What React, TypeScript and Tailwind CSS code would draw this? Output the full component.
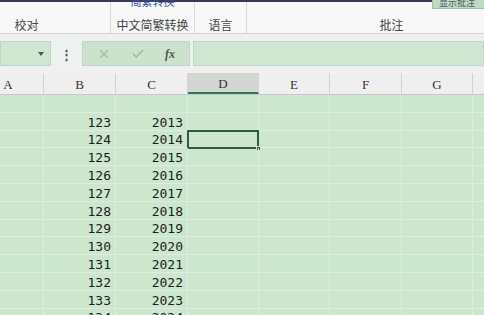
import { X, Check } from 'lucide-react'

const cols = [
  { name: 'A', w: 'w-[71px]' },
  { name: 'B', w: 'w-[72px]' },
  { name: 'C', w: 'w-[72px]' },
  { name: 'D', w: 'w-[71px]' },
  { name: 'E', w: 'w-[71px]' },
  { name: 'F', w: 'w-[72px]' },
  { name: 'G', w: 'w-[71px]' },
  { name: '', w: 'w-[71px]' },
]

const rows: [string, string][] = [
  ['', ''],
  ['123', '2013'],
  ['124', '2014'],
  ['125', '2015'],
  ['126', '2016'],
  ['127', '2017'],
  ['128', '2018'],
  ['129', '2019'],
  ['130', '2020'],
  ['131', '2021'],
  ['132', '2022'],
  ['133', '2023'],
  ['134', '2024'],
]

function Ribbon() {
  return (
    <div className="h-[34px] bg-[#f8f8f8] border-b border-[#d4d4d4] relative overflow-hidden">
      <div className="h-[2px] bg-[#3a3858]" />
      <div className="flex h-[32px] text-[12px] text-[#444]">
        <div className="w-[111px] border-r border-[#d8d8d8] flex items-end justify-center pr-[57px]">校对</div>
        <div className="w-[84px] border-r border-[#d8d8d8] flex flex-col items-center justify-between">
          <div className="text-[11px] text-[#35509a] leading-none -mt-[6px]">简繁转换</div>
          <div>中文简繁转换</div>
        </div>
        <div className="w-[52px] border-r border-[#d8d8d8] flex items-end justify-center">语言</div>
        <div className="flex-1 flex items-end justify-center pl-[52px]">批注</div>
      </div>
      <div className="absolute right-0 top-0 w-[52px] h-[11px] bg-[#bcdcc2] border-l border-b border-[#9cc2a4] text-[9px] leading-none text-[#556] pl-[6px] -mt-[2px]">显示批注</div>
    </div>
  )
}

function FormulaBar() {
  return (
    <div className="bg-[#f0f0f0] pt-[7px] pb-[7px]">
      <div className="flex items-center h-[25px] bg-[#cfe5d1]">
        <div className="w-[51px] h-full border border-[#c3d3c5] bg-[#cfe6d1] flex items-center justify-end pr-[6px]">
          <div className="w-0 h-0 border-l-[3px] border-r-[3px] border-t-[4px] border-l-transparent border-r-transparent border-t-[#555]" />
        </div>
        <div className="w-[31px] h-full bg-[#eef2ee] flex items-center justify-center text-[#555] text-[13px] font-bold leading-none">⋮</div>
        <div className="w-[108px] h-full border border-[#c3d3c5] bg-[#cbe3cd] flex items-center justify-around px-[4px] text-[#9db9a2]">
          <X size={14} strokeWidth={2} />
          <Check size={14} strokeWidth={2.5} />
          <span className="text-[#555] italic text-[12px] font-bold" style={{ fontFamily: '"Liberation Serif", serif' }}>fx</span>
        </div>
        <div className="w-[3px] h-full bg-[#eef2ee]" />
        <div className="flex-1 h-full border border-[#c3d3c5] bg-[#cfe6d1]" />
      </div>
    </div>
  )
}

export default function App() {
  return (
    <div className="w-[484px] h-[315px] overflow-hidden bg-[#cde7cf]" style={{ fontFamily: '"Noto Sans CJK SC", sans-serif' }}>
      <Ribbon />
      <FormulaBar />
      <div className="ml-[-27px] w-[600px]">
        <div className="flex h-[22px] bg-[#efefef] border-b border-[#c9c9c9]" style={{ fontFamily: '"Liberation Serif", serif' }}>
          {cols.map((c, k) => (
            <div
              key={k}
              className={`${c.w} shrink-0 flex items-center justify-center pt-[2px] text-[13px] text-[#333] border-r border-[#d2d2d2] ${c.name === 'D' ? 'bg-[#d3d6d3] border-b-2 border-b-[#2f7a4a]' : ''}`}
            >
              {c.name}
            </div>
          ))}
        </div>
        {rows.map((r, i) => (
          <div key={i} className="flex h-[17.8px] border-b border-[#deeddf]" style={{ fontFamily: '"DejaVu Sans Mono", monospace' }}>
            {cols.map((c, k) => (
              <div
                key={k}
                className="w-[71px] shrink-0 relative flex items-center justify-end pr-[4px] pt-[2px] text-[13px] leading-none text-[#1c1c1c] border-r border-[#deeddf]"
                style={{ width: k === 1 || k === 2 || k === 5 ? 72 : 71 }}
              >
                {k === 1 ? r[0] : k === 2 ? r[1] : ''}
                {k === 3 && i === 2 && (
                  <div className="absolute -left-[1px] -top-[1px] w-[72px] h-[19px] border-2 border-[#2e5b3c]">
                    <div className="absolute -right-[4px] -bottom-[4px] w-[5px] h-[5px] bg-[#2e5b3c] border border-[#cde7cf]" />
                  </div>
                )}
              </div>
            ))}
          </div>
        ))}
      </div>
    </div>
  )
}
